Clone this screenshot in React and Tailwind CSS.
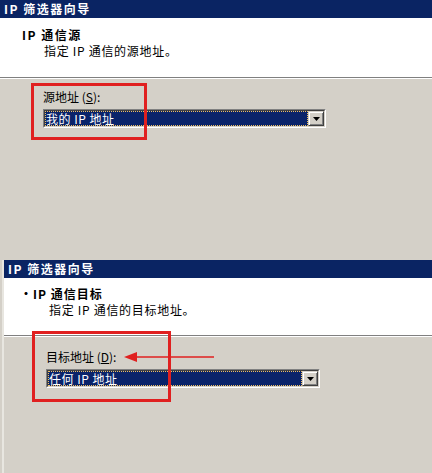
import React from 'react';

// --- Small pieces ---

const Combo = ({ value, width }) => (
    <div className={`flex h-[19px] ${width} border border-t-[#808080] border-l-[#808080] border-b-white border-r-white`}>
        <div className="flex flex-1 border border-t-[#404040] border-l-[#404040] border-b-[#d4d0c8] border-r-[#d4d0c8] bg-white">
            <div className="flex flex-1 items-center bg-[#0a246a] text-white outline outline-1 outline-dotted outline-[#f0c060] -outline-offset-1 pl-[1px] text-[12px] leading-none tracking-[0.5px]">
                {value}
            </div>
            <div className="flex w-[16px] items-center justify-center bg-[#d4d0c8] border border-t-[#d4d0c8] border-l-[#d4d0c8] border-b-[#404040] border-r-[#404040] shadow-[inset_1px_1px_0_#ffffff,inset_-1px_-1px_0_#808080]">
                <svg width="7" height="4" viewBox="0 0 7 4">
                    <polygon points="0,0 7,0 3.5,4" fill="#000" />
                </svg>
            </div>
        </div>
    </div>
);

const Header = ({ className }) => (
    <div className={`flex h-[18px] items-center bg-[#0a2463] text-white text-[12px] font-bold tracking-[1.5px] ${className}`}>
        IP 筛选器向导
    </div>
);

// --- Main App Component ---

function App() {
    return (
        <div
            className="relative w-[432px] h-[473px] overflow-hidden bg-[#d4d0c8] text-black"
            style={{ fontFamily: '"Noto Sans CJK SC", "DejaVu Sans", sans-serif' }}
        >
            {/* --- Top dialog --- */}
            <div className="flex flex-col h-[260px]">
                <Header className="pl-[4px]" />
                <div className="flex flex-col h-[59px] bg-white pt-[9px]">
                    <div className="pl-[22px] text-[12px] font-bold leading-[16px] tracking-[1.5px]">IP 通信源</div>
                    <div className="pl-[44px] text-[12px] leading-[16px] tracking-[0.7px]">指定 IP 通信的源地址。</div>
                </div>
                <div className="h-[1px] bg-[#808080]" />
                <div className="h-[1px] bg-white" />
                <div className="flex flex-col pl-[43px] pt-[11px] gap-[5px]">
                    <div className="text-[12px] leading-[14px]">
                        源地址 (<span className="underline">S</span>):
                    </div>
                    <Combo value="我的 IP 地址" width="w-[283px]" />
                </div>
            </div>

            {/* --- Bottom dialog --- */}
            <div className="flex flex-col ml-[2px] border-l-2 border-[#e8e6e0] h-[213px]">
                <Header className="pl-[4px] h-[17px]" />
                <div className="flex flex-col h-[57px] bg-white pt-[8px]">
                    <div className="pl-[16px] text-[12px] font-bold leading-[16px] tracking-[1px]">·IP 通信目标</div>
                    <div className="pl-[45px] text-[12px] leading-[16px] tracking-[0.7px]">指定 IP 通信的目标地址。</div>
                </div>
                <div className="h-[1px] bg-[#808080]" />
                <div className="h-[1px] bg-white" />
                <div className="flex flex-col pl-[42px] pt-[13px] gap-[5px]">
                    <div className="text-[12px] leading-[14px]">
                        目标地址 (<span className="underline">D</span>):
                    </div>
                    <Combo value="任何 IP 地址" width="w-[274px]" />
                </div>
            </div>

            {/* --- Annotations --- */}
            <div className="absolute left-[31px] top-[83px] w-[116px] h-[57px] border-[3px] border-[#e02020]" />
            <div className="absolute left-[32px] top-[331px] w-[139px] h-[71px] border-[3px] border-[#e02020]" />
            <svg className="absolute left-[124px] top-[351px]" width="92" height="12" viewBox="0 0 92 12">
                <line x1="10" y1="6" x2="90" y2="6" stroke="#e02020" strokeWidth="1.5" />
                <polygon points="0,6 13,1 13,11" fill="#e02020" />
            </svg>
        </div>
    );
}

export default App;
